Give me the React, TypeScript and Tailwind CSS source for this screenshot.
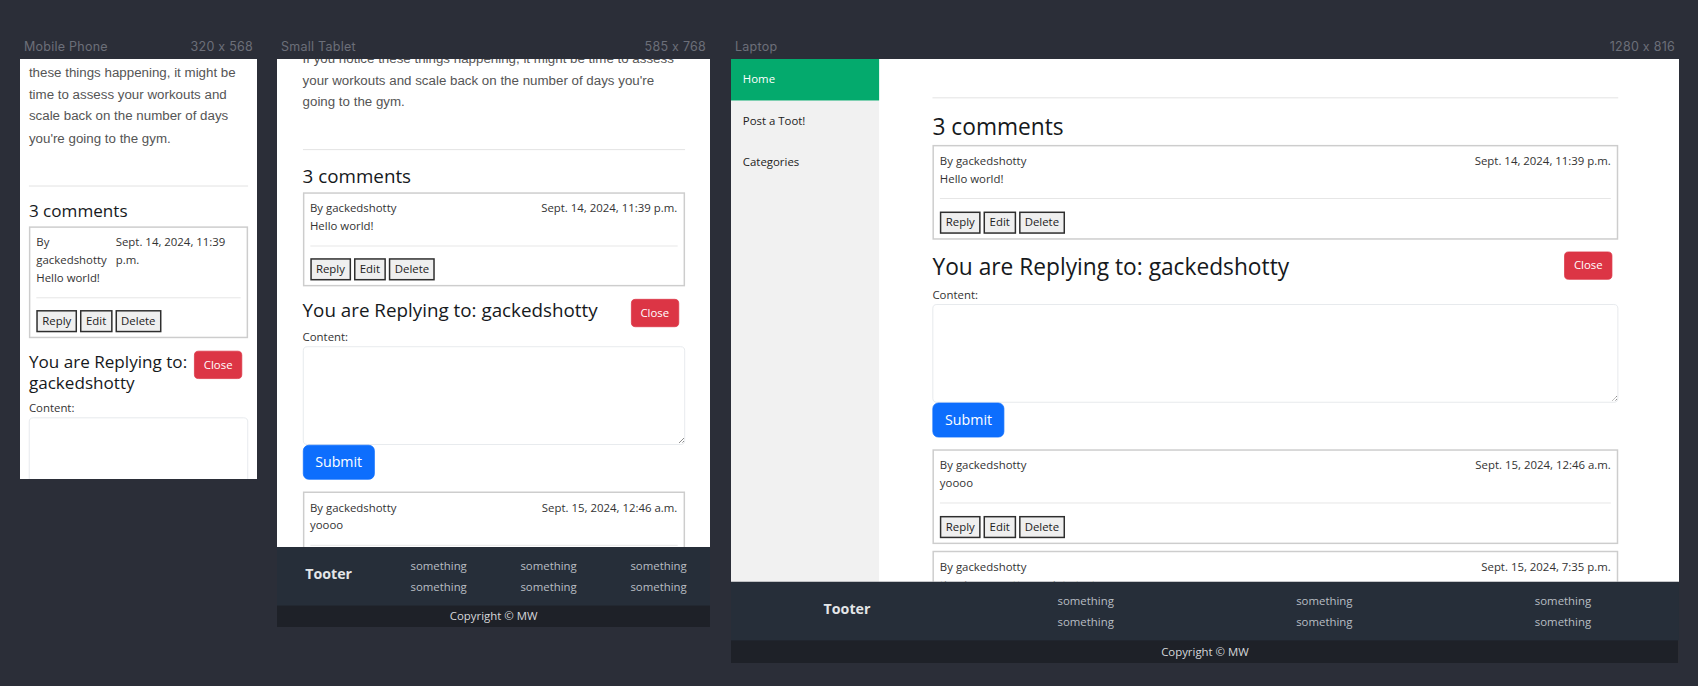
import React from 'react';

const FULL_TEXT =
  "If you notice these things happening, it might be time to assess your workouts and scale back on the number of days you're going to the gym.";
const MOBILE_TEXT =
  "these things happening, it might be time to assess your workouts and scale back on the number of days you're going to the gym.";

type HeadProps = { hCls: string };

const Comment: React.FC<{ date: string; body: string; cls?: string }> = ({ date, body, cls = '' }) => (
  <div className={`border-2 border-[#cdcdcd] px-[8px] pt-[8px] pb-[6px] text-[#333] ${cls}`}>
    <div className="flex justify-between">
      <div>By gackedshotty</div>
      <div>{date}</div>
    </div>
    <div>{body}</div>
    <hr className="mt-[14px] mb-[16.5px] border-t border-[#dedede]" />
    <div className="flex gap-[4px]">
      {['Reply', 'Edit', 'Delete'].map((l) => (
        <button
          key={l}
          className="h-[30px] px-[6px] bg-[#efefef] border-2 border-[#2e2e2e] leading-[24px] text-[#222]"
        >
          {l}
        </button>
      ))}
    </div>
  </div>
);

const Thread: React.FC<HeadProps & { para: string; paraCls: string }> = ({ hCls, para, paraCls }) => (
  <div className={paraCls}>
    <p className="font-['Liberation_Sans',Arial,sans-serif] text-[18px] leading-[29.7px] text-[#555] mb-[48px]">
      {para}
    </p>
    <hr className="border-t border-[#d9d9d9]" />
    <h2 className={`${hCls} mt-[18.5px] mb-[6.5px] font-medium text-[#16191c]`}>3 comments</h2>
    <Comment date="Sept. 14, 2024, 11:39 p.m." body="Hello world!" />

    <div className="flex items-start justify-between pr-[8px] mt-[16.5px]">
      <h2 className={`${hCls} mb-[8px] font-medium text-[#16191c]`}>You are Replying to: gackedshotty</h2>
      <button className="shrink-0 px-[12px] py-[6px] leading-[24px] rounded-[6px] bg-[#dc3545] border border-[#dc3545] text-white">
        Close
      </button>
    </div>
    <label className="block leading-[24px] text-[#333]">Content:</label>
    <textarea className="block w-full h-[133px] border border-[#dee2e6] rounded-[6px] bg-white" />
    <button className="h-[47.5px] px-[16px] rounded-[8px] bg-[#0d6efd] border border-[#0d6efd] text-white text-[19.2px] leading-[30px]">
      Submit
    </button>

    <Comment date="Sept. 15, 2024, 12:46 a.m." body="yoooo" cls="mt-[16px]" />
    <Comment date="Sept. 15, 2024, 7:35 p.m." body="thank you matt new date test" cls="mt-[9px]" />
  </div>
);

const Footer: React.FC<{ copyCls: string }> = ({ copyCls }) => (
  <footer className="shrink-0 bg-[#1e2128]">
    <div className="bg-[#262e39] h-[79px] overflow-hidden">
      <div className="grid grid-cols-4 mx-[-4.5px] h-full items-center text-center">
        <div className="pb-[7px] font-bold text-[19.2px] leading-[30px] text-[#e4e6e8]">Tooter</div>
        {[0, 1, 2].map((i) => (
          <div key={i} className="leading-[28px] text-[#b9bec4]">
            <div>something</div>
            <div>something</div>
          </div>
        ))}
      </div>
    </div>
    <div className={`flex items-center justify-center text-[#d6d8db] ${copyCls}`}>
      Copyright © MW
    </div>
  </footer>
);

const Device: React.FC<{
  label: string;
  size: string;
  frameCls: string;
  screenCls: string;
  children: React.ReactNode;
}> = ({ label, size, frameCls, screenCls, children }) => (
  <div className="shrink-0">
    <div className="flex h-[23px] items-center justify-between px-[4px] font-['Inter',sans-serif] text-[12.5px] tracking-[0.02em] text-[#6c6f79]">
      <span>{label}</span>
      <span>{size}</span>
    </div>
    <div className={`overflow-hidden bg-white ${frameCls}`}>
      <div
        className={`origin-top-left scale-[0.7406] overflow-hidden font-['Open_Sans',sans-serif] text-[15.4px] leading-[24px] ${screenCls}`}
      >
        {children}
      </div>
    </div>
  </div>
);

const App: React.FC = () => {
  return (
    <div className="w-[1698px] h-[686px] overflow-hidden bg-[#2b2e38]">
      <div className="flex items-start gap-[20px] pl-[20px] pt-[36px]">
        {/* Mobile */}
        <Device label="Mobile Phone" size="320 x 568" frameCls="w-[237px] h-[420px]" screenCls="w-[320px] h-[568px] bg-white">
          <div className="px-[12px] pt-[4px]">
            <Thread para={MOBILE_TEXT} paraCls="" hCls="text-[23.1px] leading-[28.9px]" />
          </div>
        </Device>

        {/* Tablet */}
        <Device label="Small Tablet" size="585 x 768" frameCls="w-[433px] h-[568px]" screenCls="w-[585px] h-[768px] flex flex-col bg-white">
          <div className="h-[659px] shrink-0 overflow-hidden">
            <div className="mx-auto w-[540px] px-[12px]">
              <Thread para={FULL_TEXT} paraCls="mt-[-15px]" hCls="text-[25.4px] leading-[31.8px]" />
            </div>
          </div>
          <Footer copyCls="h-[30px]" />
        </Device>

        {/* Laptop */}
        <div className="ml-[1px]">
          <Device label="Laptop" size="1280 x 816" frameCls="w-[948px] h-[604px]" screenCls="w-[1280px] h-[816px] flex flex-col bg-white">
            <div className="flex h-[706px] shrink-0 overflow-hidden">
              <nav className="w-[200px] shrink-0 bg-[#f1f1f1]">
                <a className="block p-[16px] leading-[24px] bg-[#04aa6d] text-white">Home</a>
                <a className="block p-[16px] leading-[24px] text-[#222]">Post a Toot!</a>
                <a className="block p-[16px] leading-[24px] text-[#222]">Categories</a>
              </nav>
              <main className="flex-1 overflow-hidden">
                <div className="ml-[72px] w-[926px]">
                  <Thread para={FULL_TEXT} paraCls="mt-[-55.6px]" hCls="text-[30.7px] leading-[38.4px]" />
                </div>
              </main>
            </div>
            <Footer copyCls="h-[31px]" />
          </Device>
        </div>
      </div>
    </div>
  );
};

export default App;
